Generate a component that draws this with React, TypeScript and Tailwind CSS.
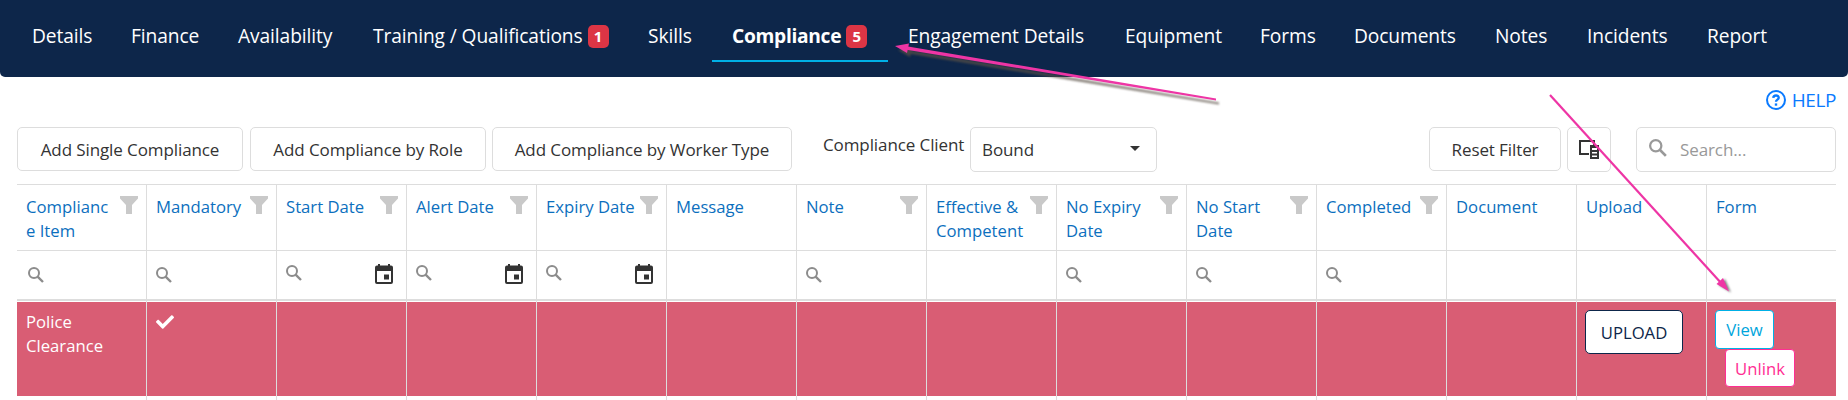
import { FaCheck } from 'react-icons/fa'

const tabs = [
  { label: 'Details', width: 'w-[99px]' },
  { label: 'Finance', width: 'w-[107px]' },
  { label: 'Availability', width: 'w-[135px]' },
  { label: 'Training / Qualifications', width: 'w-[275px]', badge: 1 },
  { label: 'Skills', width: 'w-[84px]' },
  { label: 'Compliance', width: 'w-[176px]', badge: 5, active: true },
  { label: 'Engagement Details', width: 'w-[217px]' },
  { label: 'Equipment', width: 'w-[135px]' },
  { label: 'Forms', width: 'w-[94px]' },
  { label: 'Documents', width: 'w-[141px]' },
  { label: 'Notes', width: 'w-[92px]' },
  { label: 'Incidents', width: 'w-[120px]' },
  { label: 'Report', width: 'w-[98px]' },
]

const columns = [
  { title: 'Compliance Item', filter: true, search: 'text' },
  { title: 'Mandatory', filter: true, search: 'text' },
  { title: 'Start Date', filter: true, search: 'date' },
  { title: 'Alert Date', filter: true, search: 'date' },
  { title: 'Expiry Date', filter: true, search: 'date' },
  { title: 'Message' },
  { title: 'Note', filter: true, search: 'text' },
  { title: 'Effective & Competent', filter: true },
  { title: 'No Expiry Date', filter: true, search: 'text' },
  { title: 'No Start Date', filter: true, search: 'text' },
  { title: 'Completed', filter: true, search: 'text' },
  { title: 'Document' },
  { title: 'Upload' },
  { title: 'Form' },
]

const button = 'flex items-center justify-center rounded-[5px] border border-[#ddd] bg-white whitespace-nowrap'

function SearchIcon({ className }: { className: string }) {
  return (
    <svg viewBox="0 0 16 16" className={className} fill="none" stroke="currentColor">
      <circle cx="6" cy="6" r="5" strokeWidth="2" />
      <path d="M9.6 9.6L15 15" strokeWidth="2.4" />
    </svg>
  )
}

function FilterIcon() {
  return (
    <svg viewBox="0 0 18 18" className="mt-[11px] size-[18px] shrink-0 text-[#c9c9c9]" fill="currentColor">
      <path d="M0 0H18V2.5L12 9V18H6V9L0 2.5Z" />
    </svg>
  )
}

function CalendarIcon() {
  return (
    <svg viewBox="0 0 18 20" className="h-5 w-[18px] text-[#333]" fill="currentColor">
      <path
        fillRule="evenodd"
        d="M3 0H5V1.5H13V0H15V1.5H16A2 2 0 0 1 18 3.5V18A2 2 0 0 1 16 20H2A2 2 0 0 1 0 18V3.5A2 2 0 0 1 2 1.5H3ZM2 7V18H16V7Z"
      />
      <path d="M9 10.5H14V15.5H9Z" />
    </svg>
  )
}

function ColumnChooserIcon() {
  return (
    <svg viewBox="0 0 20 19" className="h-[19px] w-5 text-[#333]" fill="currentColor">
      <path fillRule="evenodd" d="M0 0H16V5H14V2H2V13H10V15H0Z" />
      <path fillRule="evenodd" d="M11 5H20V19H11ZM13 8V10H18V8ZM13 12V13.5H18V12ZM13 15.5V17H18V15.5Z" />
    </svg>
  )
}

function NavBar() {
  return (
    <nav className="flex h-[77px] rounded-b-[5px] bg-[#0d264a] pt-3 pl-3 text-[19.2px] text-white">
      {tabs.map((tab) => (
        <div
          key={tab.label}
          className={`flex h-[50px] shrink-0 items-center whitespace-nowrap border-b-2 pt-px pl-5 ${tab.width} ${
            tab.active ? 'border-[#00b0e6] font-bold tracking-[-0.3px]' : 'border-transparent tracking-[-0.1px]'
          }`}
        >
          {tab.label}
          {tab.badge && (
            <span className="ml-[5px] flex h-[23px] w-[21px] items-center justify-center rounded-[5px] bg-[#dc3545] text-[15px] font-bold">
              {tab.badge}
            </span>
          )}
        </div>
      ))}
    </nav>
  )
}

function Toolbar() {
  return (
    <div className="flex h-[57px] items-start pr-3 pl-[17px] text-[17px] tracking-[-0.1px] text-[#333]">
      <button className={`${button} h-11 w-[226px] pt-px`}>Add Single Compliance</button>
      <button className={`${button} ml-[7px] h-11 w-[236px] pt-px`}>Add Compliance by Role</button>
      <button className={`${button} ml-[6px] h-11 w-[300px] pt-px`}>Add Compliance by Worker Type</button>
      <span className="mt-[5px] ml-[31px] w-[147px] whitespace-nowrap">Compliance Client</span>
      <div className="flex h-[45px] w-[187px] items-center justify-between rounded-[5px] border border-[#ddd] pr-4 pl-[11px]">
        Bound
        <span className="mb-[3px] border-x-[5px] border-t-[5px] border-x-transparent border-t-[#333]" />
      </div>
      <button className={`${button} ml-auto h-11 w-[132px] pt-px`}>Reset Filter</button>
      <button className={`${button} ml-[6px] h-[45px] w-11`}>
        <ColumnChooserIcon />
      </button>
      <div className="ml-[25px] flex h-[45px] w-[200px] items-center rounded-[5px] border border-[#ddd] pl-3 text-[#999]">
        <SearchIcon className="mb-[3px] size-[18px]" />
        <span className="mt-px ml-[13px]">Search...</span>
      </div>
    </div>
  )
}

function Cell({ index }: { index: number }) {
  if (index === 0) return <>Police Clearance</>
  if (index === 1) return <FaCheck className="mt-[3px] size-[18px]" />
  if (index === 12)
    return (
      <button className="-ml-px h-11 w-[98px] rounded-[5px] border border-[#0d264a] bg-white pt-px text-[#0d264a]">
        UPLOAD
      </button>
    )
  if (index === 13)
    return (
      <div className="-ml-px flex flex-col items-start">
        <button className="h-[39px] w-[59px] rounded-[4px] border border-[#00b0e6] bg-white text-[#00a5dc]">View</button>
        <button className="ml-[10px] h-[38px] w-[70px] rounded-[4px] border border-[#ff2e93] bg-white pt-px text-[#ff2e93]">
          Unlink
        </button>
      </div>
    )
  return null
}

function Grid() {
  return (
    <div className="ml-[17px] flex w-[1819px] border-t border-[#ddd] text-[16.7px] leading-6">
      {columns.map((column, i) => (
        <div
          key={column.title}
          className={`h-[215px] shrink-0 ${i === 13 ? 'w-[129px]' : 'w-[130px] border-r border-[#ddd]'}`}
        >
          <div className="flex h-[66px] justify-between border-b border-[#ddd] pr-2 pl-[9px] text-[#0c6fbe]">
            <span className={`mt-[10px] ${column.filter ? 'w-[89px] shrink-0' : ''} ${i === 0 ? 'break-all' : ''}`}>
              {column.title}
            </span>
            {column.filter && <FilterIcon />}
          </div>
          <div className="flex h-[50px] items-start justify-between border-b-2 border-[#ddd] pr-[13px] pl-[9px] text-[#8c8c8c]">
            {column.search && (
              <SearchIcon
                className={`size-4 ${column.search === 'date' ? 'mt-[14px]' : 'mt-4'} ${i === 0 ? 'ml-[2px]' : ''}`}
              />
            )}
            {column.search === 'date' && (
              <span className="mt-[13px]">
                <CalendarIcon />
              </span>
            )}
          </div>
          <div className="mt-px h-[94px] bg-[#d95d74] pt-2 pl-[9px] text-white">
            <Cell index={i} />
          </div>
        </div>
      ))}
    </div>
  )
}

// Callout arrows drawn over the page
function Arrows() {
  return (
    <svg viewBox="0 0 1848 400" className="pointer-events-none absolute inset-0 h-[400px] w-[1848px]">
      <g className="drop-shadow-[3px_4px_1px_rgba(90,80,70,0.75)]" fill="#ee35a5">
        <path d="M905 46L1216 98.500V100.500L905 49.500Z" />
        <path d="M895 46L909 43.500L907 53Z" />
      </g>
      <g fill="#ee35a5">
        <path d="M1550 95L1722 284" stroke="#ee35a5" strokeWidth="2.2" />
        <path
          d="M1729 291.500L1716.500 284L1723 278Z"
          className="drop-shadow-[2px_1px_1px_rgba(0,0,0,0.5)]"
        />
      </g>
    </svg>
  )
}

export default function App() {
  return (
    <div className="relative h-[400px] w-[1848px] overflow-hidden bg-white font-['Open_Sans',sans-serif]">
      <NavBar />
      <div className="flex h-[50px] items-start justify-end pt-[9px] pr-3 text-[19px] tracking-[-0.4px] text-[#0a7aff]">
        <svg viewBox="0 0 20 20" className="mt-1 mr-[6px] size-5" fill="none" stroke="currentColor" strokeWidth="2">
          <circle cx="10" cy="10" r="9" />
          <path d="M7.300 7.800C7.500 4.700 12.700 4.700 12.700 7.700C12.700 9.800 10 9.500 10 11.800" strokeWidth="2.400" />
          <path d="M10 13.400V15.700" strokeWidth="2.400" />
        </svg>
        HELP
      </div>
      <Toolbar />
      <Grid />
      <Arrows />
    </div>
  )
}
